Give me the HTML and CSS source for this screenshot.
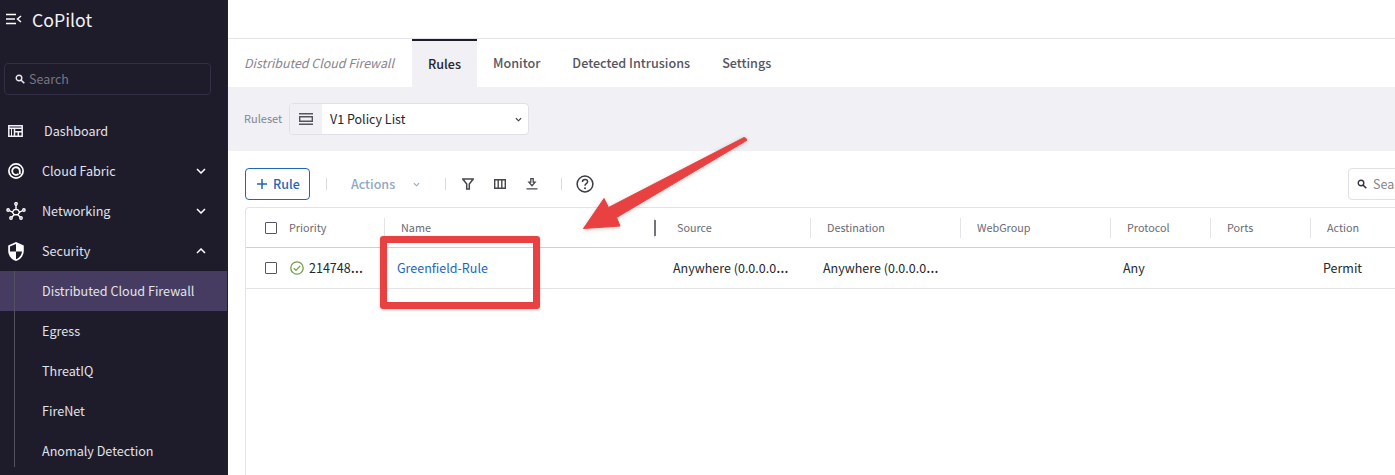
FILE: index.html
```html
<!DOCTYPE html>
<html lang="en">
<head>
<meta charset="utf-8">
<title>CoPilot</title>
<link rel="stylesheet" href="styles.css">
</head>
<body>
<div class="app">
  <aside class="sidebar">
    <div class="brand">
      <svg class="brand-icon" viewBox="0 0 16 12" width="16" height="12"><path d="M0 1.500h10M0 6h9M0 10.500h10M15 3l-3.500 3 3.500 3" fill="none" stroke="#fff" stroke-width="1.500"/></svg>
      <span class="brand-name">CoPilot</span>
    </div>
    <div class="side-search">
      <svg viewBox="0 0 10 10" width="10" height="10"><circle cx="4" cy="4" r="2.800" fill="none" stroke="#e8e8ee" stroke-width="1.400"/><path d="M6 6l3.300 3.300" stroke="#e8e8ee" stroke-width="1.600"/></svg>
      <span class="lift">Search</span>
    </div>
    <nav class="nav">
      <div class="nav-item dash">
        <svg class="nav-icon" viewBox="0 0 15 12" width="15" height="12"><path d="M.8.800h13.400v10.400H.8zM.8 3.300h13.400M6.500 3.300v7.900M6.500 6.800h7.700M10.300 6.800v4.400" fill="none" stroke="#f2f2f6" stroke-width="1.500"/><path d="M3.500 3.300v7.900" stroke="#f2f2f6" stroke-width="1"/></svg>
        <span class="lift">Dashboard</span>
      </div>
      <div class="nav-item">
        <svg class="nav-icon" viewBox="0 0 16 16" width="16" height="16"><circle cx="8" cy="8" r="7.100" fill="none" stroke="#fff" stroke-width="1.700"/><path d="M11.800 8a3.800 3.800 0 1 0-1.300 2.900M11.800 8v3.300" fill="none" stroke="#fff" stroke-width="1.800"/></svg>
        <span class="lift">Cloud Fabric</span>
        <svg class="chev" viewBox="0 0 10 6" width="10" height="6"><path d="M1 1l4 4 4-4" fill="none" stroke="#fff" stroke-width="1.500"/></svg>
      </div>
      <div class="nav-item">
        <svg class="nav-icon net" viewBox="0 0 20 18" width="20" height="18"><g fill="none" stroke="#fff" stroke-width="1.400"><path d="M8.200 7.600h3.600l1.800 2.600-1.800 2.600H8.200l-1.800-2.600zM10 2.900v4.700M6.400 10.200L3.200 8.500M13.600 10.200l3.200-1.700M8.200 12.800l-2.300 2.300M11.800 12.800l2.300 2.300"/><circle cx="10" cy="1.800" r="1.200"/><circle cx="2.100" cy="8" r="1.200"/><circle cx="17.900" cy="8" r="1.200"/><circle cx="5" cy="16" r="1.200"/><circle cx="15" cy="16" r="1.200"/></g></svg>
        <span class="lift">Networking</span>
        <svg class="chev" viewBox="0 0 10 6" width="10" height="6"><path d="M1 1l4 4 4-4" fill="none" stroke="#fff" stroke-width="1.500"/></svg>
      </div>
      <div class="nav-item">
        <svg class="nav-icon shield" viewBox="3 1 18 22" width="16" height="19"><path fill="#fff" d="M12 1L3 5v6c0 5.550 3.840 10.740 9 12 5.160-1.260 9-6.450 9-12V5l-9-4zm0 10.990h7c-.53 4.120-3.280 7.790-7 8.940V12H5V6.300l7-3.110v8.800z"/></svg>
        <span class="lift">Security</span>
        <svg class="chev" viewBox="0 0 10 6" width="10" height="6"><path d="M1 5l4-4 4 4" fill="none" stroke="#fff" stroke-width="1.500"/></svg>
      </div>
      <div class="sub">
        <div class="sub-item active"><span class="lift">Distributed Cloud Firewall</span></div>
        <div class="sub-item"><span class="lift">Egress</span></div>
        <div class="sub-item"><span class="lift">ThreatIQ</span></div>
        <div class="sub-item"><span class="lift">FireNet</span></div>
        <div class="sub-item"><span class="lift">Anomaly Detection</span></div>
      </div>
    </nav>
  </aside>

  <main class="main">
    <div class="topbar"></div>
    <div class="tabs">
      <span class="crumb">Distributed Cloud Firewall</span>
      <span class="tab current"><span class="lift">Rules</span></span>
      <span class="tab"><span class="lift">Monitor</span></span>
      <span class="tab"><span class="lift">Detected Intrusions</span></span>
      <span class="tab"><span class="lift">Settings</span></span>
    </div>
    <div class="band">
      <span class="band-label lift">Ruleset</span>
      <div class="select">
        <span class="select-icon"><svg viewBox="0 0 14 12" width="14" height="12"><path d="M0 .750h14M0 11.250h14" stroke="#55555f" stroke-width="1.500"/><path d="M.7 3.700h12.600v4.600H.7z" fill="none" stroke="#55555f" stroke-width="1.400"/></svg></span>
        <span class="select-value lift">V1 Policy List</span>
        <svg class="select-chev" viewBox="0 0 8 5" width="7" height="5"><path d="M1 1l3 3 3-3" fill="none" stroke="#333" stroke-width="1.300"/></svg>
      </div>
    </div>
    <div class="toolbar">
      <button class="add"><svg viewBox="0 0 10 10" width="10" height="10"><path d="M5 0v10M0 5h10" stroke="#1f66b8" stroke-width="1.500"/></svg><span class="lift">Rule</span></button>
      <i class="tsep s1"></i>
      <span class="actions lift">Actions</span>
      <svg class="act-chev" viewBox="0 0 8 5" width="7" height="5"><path d="M1 1l3 3 3-3" fill="none" stroke="#8fa8c4" stroke-width="1.200"/></svg>
      <i class="tsep s2"></i>
      <svg class="ticon i1" viewBox="0 0 12 12" width="12" height="12"><path d="M.8 1h10.400L7.300 6v5H4.700V6z" fill="none" stroke="#45454f" stroke-width="1.500"/></svg>
      <svg class="ticon i2" viewBox="0 0 12 10" width="12" height="10"><path d="M.7.700h10.600v8.600H.7zM4.200.700v8.600M7.800.700v8.600" fill="none" stroke="#45454f" stroke-width="1.400"/></svg>
      <svg class="ticon i3" viewBox="0 0 12 12" width="12" height="12"><path d="M4.800.7h2.400v3.500h1.900L6 7.700 2.900 4.200h1.900zM.5 10.800h11" fill="none" stroke="#45454f" stroke-width="1.300"/></svg>
      <i class="tsep s3"></i>
      <svg class="help" viewBox="0 0 18 18" width="18" height="18"><circle cx="9" cy="9" r="7.900" fill="none" stroke="#3c3c44" stroke-width="1.500"/><path d="M6.400 7c0-1.500 1.200-2.500 2.700-2.500 1.400 0 2.500.9 2.500 2.200 0 2-2.600 2-2.600 4" fill="none" stroke="#3c3c44" stroke-width="1.500"/><circle cx="9" cy="13.300" r="1" fill="#3c3c44"/></svg>
      <div class="table-search">
        <svg viewBox="0 0 10 10" width="10" height="10"><circle cx="4" cy="4" r="2.800" fill="none" stroke="#33333b" stroke-width="1.400"/><path d="M6 6l3.300 3.300" stroke="#33333b" stroke-width="1.600"/></svg>
        <span class="lift">Search</span>
      </div>
    </div>
    <div class="table">
      <div class="row head">
        <div class="cell c-pri"><i class="check"></i><span class="lift">Priority</span></div>
        <div class="cell c-name"><span class="lift">Name</span></div>
        <div class="cell c-src"><span class="lift">Source</span></div>
        <div class="cell c-dst"><span class="lift">Destination</span></div>
        <div class="cell c-web"><span class="lift">WebGroup</span></div>
        <div class="cell c-pro"><span class="lift">Protocol</span></div>
        <div class="cell c-prt"><span class="lift">Ports</span></div>
        <div class="cell c-act"><span class="lift">Action</span></div>
      </div>
      <div class="row body">
        <div class="cell c-pri"><i class="check"></i><svg class="ok" viewBox="0 0 14 14" width="14" height="14"><circle cx="7" cy="7" r="6.200" fill="none" stroke="#6d9e4a" stroke-width="1.300"/><path d="M3.800 7.200l2.200 2.200 4.200-4.500" fill="none" stroke="#6d9e4a" stroke-width="1.300"/></svg><span class="lift">214748<span class="ell">…</span></span></div>
        <div class="cell c-name"><a class="link lift">Greenfield-Rule</a></div>
        <div class="cell c-src"><span class="lift">Anywhere (0.0.0.0<span class="ell">…</span></span></div>
        <div class="cell c-dst"><span class="lift">Anywhere (0.0.0.0<span class="ell">…</span></span></div>
        <div class="cell c-web"></div>
        <div class="cell c-pro"><span class="lift">Any</span></div>
        <div class="cell c-prt"></div>
        <div class="cell c-act"><span class="lift">Permit</span></div>
      </div>
    </div>
  </main>
</div>
<i class="resize-mark"></i>
<div class="callout-box"></div>
<svg class="callout-arrow" viewBox="0 0 1395 475" width="1395" height="475"><path d="M744 137.500Q747 138 746.500 140.500L616.500 217.500L620 226L583.500 228.500L604 198.500L608.500 207.500Z" fill="#e94141" stroke="#e94141" stroke-width="1" stroke-linejoin="round"/></svg>
</body>
</html>
```
FILE: styles.css
```css
* { box-sizing: border-box; }
html, body { margin: 0; height: 475px; overflow: hidden; background: #fff; }
body { font-family: "Noto Sans CJK SC", "Noto Sans", sans-serif; color: #26262c; }
.app { display: flex; width: 1395px; height: 475px; overflow: hidden; }
.lift { display: block; padding-bottom: 2px; }
.ell { font-family: "Noto Sans", sans-serif; font-size: 15.500px; line-height: 1; }

.sidebar { flex: 0 0 228px; background: #1e1b2b; color: #e8e8ee; display: flex; flex-direction: column; border-right: 1px solid #24212f; }
.brand { display: flex; align-items: center; height: 38px; padding-left: 6px; }
.brand-name { margin-left: 10px; font-size: 17.700px; color: #f2f2f6; padding-bottom: 1px; }
.side-search { display: flex; align-items: center; gap: 4px; height: 32px; width: 207px; margin: 25px 0 0 4px; padding-left: 10px; border: 1px solid #332f47; border-radius: 4px; font-size: 12.500px; color: #787585; }
.nav { margin-top: 16px; }
.nav-item { position: relative; display: flex; align-items: center; height: 40px; font-size: 12.600px; padding-left: 42px; color: #e2e2e8; }
.nav-item.dash { padding-left: 44px; }
.nav-icon { position: absolute; left: 8px; top: 12px; }
.dash .nav-icon { top: 14px; }
.nav-icon.net { left: 6px; top: 11px; }
.nav-icon.shield { top: 11px; }
.chev { position: absolute; left: 196px; top: 17px; }
.sub { position: relative; }
.sub::before { content: ""; position: absolute; left: 14px; top: 0; bottom: 4px; width: 1px; background: #55525f; z-index: 1; }
.sub-item { display: flex; align-items: center; height: 40px; padding-left: 42px; font-size: 12.600px; color: #e2e2e8; }
.sub-item.active { background: #463c62; }

.main { flex: 1; min-width: 0; display: flex; flex-direction: column; }
.topbar { height: 39px; flex: none; border-bottom: 1px solid #e3e3e8; }
.tabs { flex: none; height: 48px; display: flex; align-items: center; padding-left: 16px; }
.crumb { width: 168px; font-size: 12.400px; font-style: italic; color: #85858f; padding-bottom: 1px; }
.tab { height: 48px; padding: 0 16px; display: flex; align-items: center; font-size: 12.600px; font-weight: 500; color: #55555f; }
.tab.current { width: 65px; justify-content: center; padding: 0; background: #f0f0f5; color: #26262c; border-top: 2px solid #1e1b2b; }
.band { flex: none; height: 64px; background: #f0f0f5; display: flex; align-items: center; padding-left: 16px; }
.band-label { width: 45px; font-size: 11px; color: #85858f; }
.select { position: relative; display: flex; align-items: center; width: 240px; height: 32px; background: #fff; border: 1px solid #e0e0e6; border-radius: 4px; overflow: hidden; }
.select-icon { display: flex; align-items: center; justify-content: center; width: 32px; height: 100%; background: #f0f0f5; }
.select-value { padding-left: 8px; font-size: 12.500px; color: #26262c; }
.select-chev { position: absolute; right: 6px; top: 13px; }
.toolbar { position: relative; flex: none; height: 56px; display: flex; align-items: center; padding: 10px 0 0 17px; }
.add { display: flex; align-items: center; gap: 6px; width: 65px; height: 32px; padding: 0 0 0 11px; background: #fff; border: 1px solid #1f66b8; border-radius: 4px; font: 500 12.500px "Noto Sans CJK SC", "Noto Sans", sans-serif; color: #1f66b8; }
.tsep { width: 1px; height: 12px; background: #d8d8de; }
.s1 { margin-left: 16px; }
.actions { margin-left: 24px; font-size: 12.500px; font-weight: 500; color: #8fa8c4; }
.act-chev { margin-left: 18px; }
.s2 { margin-left: 25px; }
.ticon { flex: none; }
.i1 { margin-left: 16px; }
.i2 { margin-left: 20px; }
.i3 { margin-left: 20px; }
.s3 { margin-left: 23px; }
.help { margin-left: 14px; }
.table-search { position: absolute; left: 1120px; top: 17px; display: flex; align-items: center; gap: 6px; width: 120px; height: 32px; padding-left: 8px; border: 1px solid #e0e0e6; border-radius: 4px; font-size: 12.500px; color: #85858f; }

.table { flex: 1; margin-left: 17px; width: 1200px; border: 1px solid #e3e3e8; border-bottom: 0; border-radius: 4px 0 0 0; }
.row { display: grid; grid-template-columns: 138px 270px 156px 150px 150px 100px 100px 84px; align-items: center; }
.head { height: 40px; border-bottom: 1px solid #cfcfd6; font-size: 10.800px; color: #6a6a74; }
.body { height: 41px; border-bottom: 1px solid #e3e3e8; font-size: 12.500px; color: #26262c; }
.cell { display: flex; align-items: center; white-space: nowrap; min-width: 0; }
.head .cell { height: 20px; padding-left: 16px; border-left: 1px solid #e3e3e8; }
.head .c-pri { padding-left: 19px; border-left: 0; }
.head .c-src { padding-left: 22px; }
.body .cell { padding-left: 13px; }
.body .c-pri { padding-left: 19px; }
.body .c-src { padding-left: 19px; }
.check { flex: none; display: block; width: 12px; height: 12px; border: 1.500px solid #55555f; border-radius: 1px; background: #fff; }
.head .check { margin-right: 12px; }
.body .check { margin-right: 13px; }
.ok { flex: none; margin-right: 5px; }
.link { color: #1f66b8; }

.resize-mark { position: absolute; left: 654px; top: 220px; width: 2px; height: 16px; background: #73737c; }
.callout-box { position: absolute; left: 380px; top: 236px; width: 160px; height: 73px; border: 7px solid #e94141; border-radius: 3px; box-shadow: 0 1px 3px rgba(0,0,0,.2); }
.callout-arrow { position: absolute; left: 0; top: 0; filter: drop-shadow(0 1px 2px rgba(0,0,0,.2)); pointer-events: none; }
```
